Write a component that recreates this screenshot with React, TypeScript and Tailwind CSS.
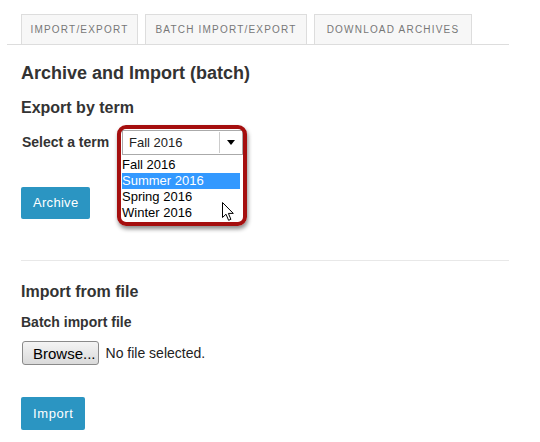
import React from "react";

const tabs = [
  { label: "Import/Export", w: "w-[117px]" },
  { label: "Batch Import/Export", w: "w-[162px]" },
  { label: "Download Archives", w: "w-[158px]" },
];

const terms = ["Fall 2016", "Summer 2016", "Spring 2016", "Winter 2016"];

function Cursor() {
  return (
    <svg width="13" height="20" viewBox="0 0 13 20" className="absolute left-[100px] top-[29px]">
      <path
        d="M0.5 0.5 L0.5 15.5 L4 12.2 L6.6 18.3 L8.9 17.3 L6.4 11.4 L11.3 11.4 Z"
        fill="#fff"
        stroke="#000"
        strokeWidth="1"
        strokeLinejoin="miter"
      />
    </svg>
  );
}

function TermSelect() {
  return (
    <div className="relative w-[121px] h-[25px]">
      {/* closed select */}
      <div className="h-full border border-[#aaa] bg-white flex items-center">
        <span className="flex-1 pl-[6px] text-[13px] text-[#222]">Fall 2016</span>
        <div className="h-[21px] w-px bg-[#ccc]" />
        <div className="w-[22px] flex items-center justify-center">
          <div className="w-0 h-0 border-l-[4px] border-r-[4px] border-t-[5px] border-l-transparent border-r-transparent border-t-black" />
        </div>
      </div>

      {/* open list */}
      <div className="absolute left-0 top-[25px] w-[118px] bg-white border-b border-[#888] pt-[2px] pb-[1px] z-10">
        {terms.map((t, i) => (
          <div
            key={t}
            className={`relative h-[16px] leading-[16px] text-[13px] ${
              i === 1 ? "bg-[#3399ff] text-white" : "text-black"
            }`}
          >
            {t}
            {i === 1 && <Cursor />}
          </div>
        ))}
      </div>

      {/* red annotation outline */}
      <div className="absolute left-[-5px] top-[-5px] w-[130px] h-[101px] border-[4px] border-[#a50f0f] rounded-[9px] shadow-[1px_3px_4px_rgba(0,0,0,0.45)] z-20 pointer-events-none" />
    </div>
  );
}

export default function App() {
  return (
    <div className="w-[540px] h-[442px] bg-white overflow-hidden font-['Liberation_Sans',Arial,sans-serif] text-[#333]">
      {/* Tabs */}
      <div className="pt-[14px] pl-[7px]">
        <div className="w-[502px] border-b border-[#ddd] flex gap-[7px] pl-[14px]">
          {tabs.map((t) => (
            <div
              key={t.label}
              className={`${t.w} h-[30px] border border-b-0 border-[#ddd] bg-[#f7f7f7] flex items-center justify-center text-[10px] tracking-[1.2px] uppercase text-[#777]`}
            >
              {t.label}
            </div>
          ))}
        </div>
      </div>

      <div className="pl-[21px] w-[509px]">
        <h2 className="mt-[18px] text-[18px] leading-[20px] font-bold">Archive and Import (batch)</h2>

        <h3 className="mt-[15px] text-[16px] leading-[20px] font-bold">Export by term</h3>
        <div className="mt-[12px] flex items-center">
          <label className="w-[101px] pl-px text-[14px] font-bold">Select a term</label>
          <TermSelect />
        </div>

        <button className="mt-[32px] h-[32px] px-[12px] rounded-[2px] bg-[#2b95c2] text-white text-[13px] tracking-[0.3px]">
          Archive
        </button>

        <div className="mt-[41px] h-px bg-[#e8e8e8]" />

        <h3 className="mt-[21px] text-[16px] leading-[20px] font-bold">Import from file</h3>
        <div className="mt-[10px] text-[14px] leading-[20px] font-bold">Batch import file</div>

        <div className="mt-[9px] flex items-center gap-[7px] pl-px">
          <button className="h-[24px] pl-[10px] pr-[2px] border border-[#8a8a8a] rounded-[3px] bg-gradient-to-b from-[#f4f4f4] to-[#dadada] text-[15px] text-black leading-none">
            Browse...
          </button>
          <span className="text-[14px] text-[#222]">No file selected.</span>
        </div>

        <button className="mt-[32px] h-[33px] px-[12px] rounded-[2px] bg-[#2b95c2] text-white text-[13px] tracking-[0.6px]">
          Import
        </button>
      </div>
    </div>
  );
}
